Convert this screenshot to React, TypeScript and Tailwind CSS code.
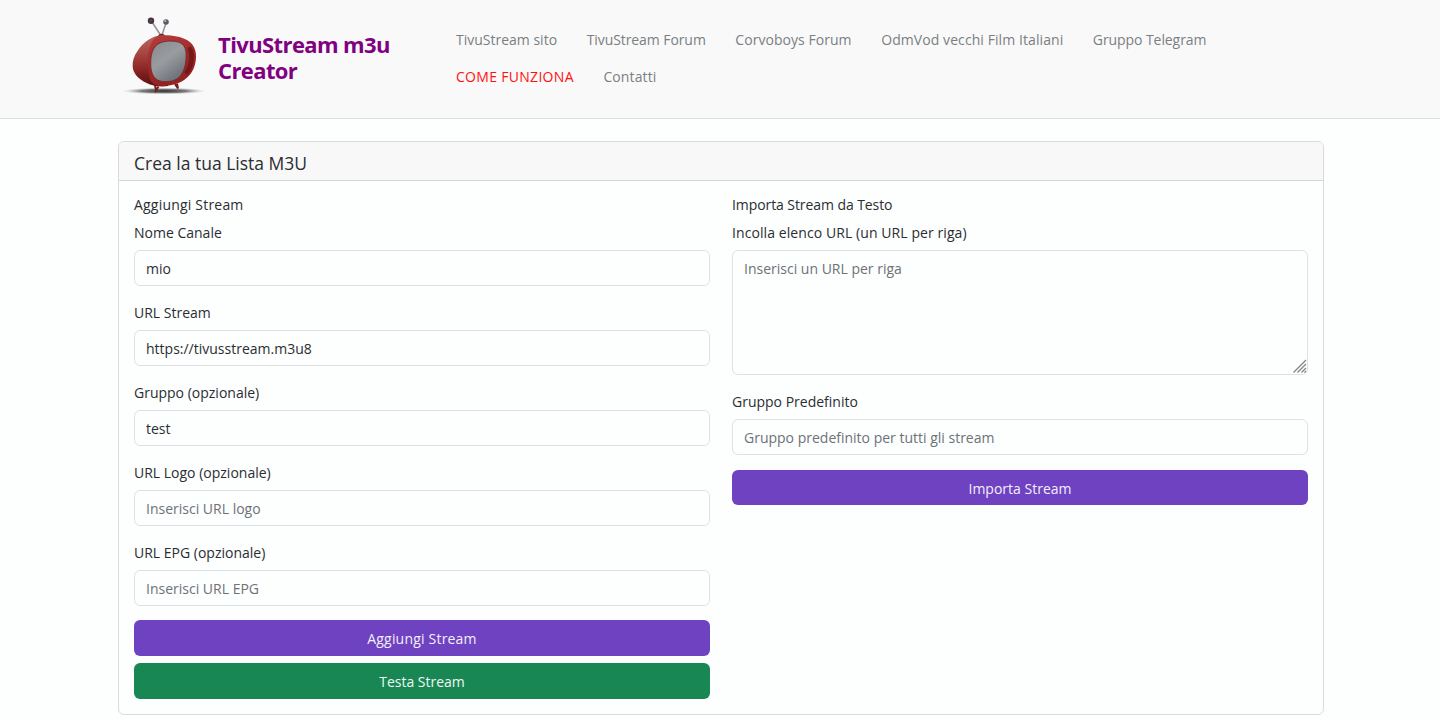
import { useState } from 'react';

const navLinks = [
  { label: 'TivuStream sito', className: 'text-[#7b7f83] tracking-normal' },
  { label: 'TivuStream Forum', className: 'text-[#7b7f83] -tracking-[0.08px]' },
  { label: 'Corvoboys Forum', className: 'text-[#7b7f83] tracking-[0.04px]' },
  { label: 'OdmVod vecchi Film Italiani', className: 'text-[#7b7f83] tracking-[0.08px]' },
  { label: 'Gruppo Telegram', className: 'text-[#7b7f83] -tracking-[0.08px]' },
  { label: 'COME FUNZIONA', className: 'text-[#ff1010] tracking-[0.3px]' },
  { label: 'Contatti', className: 'text-[#7b7f83] tracking-[0.12px]' },
];

const controlClass =
  'block w-full rounded-[6px] border border-[#dee2e6] bg-[#fdfefe] px-[11px] text-[#2a2e32] outline-none placeholder:text-[#6c7278] placeholder:opacity-100';

const TvLogo = () => (
  <svg className="h-[90px] w-[90px] shrink-0" viewBox="0 0 90 90" fill="none">
    <defs>
      <linearGradient id="shell" x1="26" y1="30" x2="30" y2="76" gradientUnits="userSpaceOnUse">
        <stop stopColor="#b5605a" />
        <stop offset="0.4" stopColor="#a03a36" />
        <stop offset="0.75" stopColor="#7c1c1c" />
        <stop offset="1" stopColor="#5c1214" />
      </linearGradient>
      <linearGradient id="face" x1="44" y1="26" x2="62" y2="77" gradientUnits="userSpaceOnUse">
        <stop stopColor="#b23b3a" />
        <stop offset="0.5" stopColor="#9c2626" />
        <stop offset="1" stopColor="#94201f" />
      </linearGradient>
      <linearGradient id="screen" x1="34" y1="34" x2="62" y2="72" gradientUnits="userSpaceOnUse">
        <stop stopColor="#8a8d8f" />
        <stop offset="0.4" stopColor="#9a9da0" />
        <stop offset="1" stopColor="#63656f" />
      </linearGradient>
      <radialGradient id="shadow">
        <stop stopColor="#2a2a2a" />
        <stop offset="0.55" stopColor="#555" stopOpacity="0.75" />
        <stop offset="1" stopColor="#bbb" stopOpacity="0" />
      </radialGradient>
    </defs>
    <ellipse cx="44" cy="81" rx="42" ry="3.4" fill="url(#shadow)" />
    {/* antennas */}
    <path d="m32 12 8.5 13M46 13l-4 12" stroke="#8f9399" strokeWidth="1.5" />
    <circle cx="31" cy="10.7" r="3.2" fill="#3d3843" />
    <circle cx="30.8" cy="10.5" r="1.2" fill="#7c3a42" />
    <circle cx="46" cy="12" r="2.8" fill="#5b5b62" />
    <circle cx="45.3" cy="11" r="1.1" fill="#b9b9bf" />
    <path d="M38 26c1-3 6-3 7 0Z" fill="#6b2526" />
    {/* feet */}
    <path d="m35 75 1 5.500 2.500-4M55 74l3 4.500-1-5" stroke="#7c191a" strokeWidth="2" />
    <path
      d="M40 25.5C33 26 23 32 17.500 41c-3.500 5-5.300 10-4.800 16 .6 8 8.300 14 17.300 17.500 5 1.800 12 2.500 18 1.500V26Z"
      fill="url(#shell)"
    />
    <path
      d="M40 25.5c8-1 20 .5 27 4.5 6 3.500 9 9 9 16.500 0 9-3.500 17-10 22-7 6-19 8.500-28.500 7C30 74 28 66 28 53c0-14 3-26 12-27.500Z"
      fill="url(#face)"
    />
    <path d="M70 39c3 6 2 16-3 23" stroke="#651217" strokeWidth="4.500" strokeLinecap="round" opacity="0.7" />
    <path
      d="M45 31.500c6-.8 13-.6 17 2.500 4 3.200 4.500 9 4 15.500-.5 7-3 14-7 18-4.500 4-13 5-19 3.500-7-2-9.300-9-9.300-18C30.700 42 34 33 45 31.500Z"
      fill="url(#screen)"
      stroke="#742428"
      strokeWidth="0.8"
    />
  </svg>
);

interface FieldProps {
  label: string;
  placeholder?: string;
  value?: string;
}

const Field = ({ label, placeholder, value = '' }: FieldProps) => {
  const [text, setText] = useState(value);

  return (
    <div>
      <label className="mb-[6px] block h-[22px]">{label}</label>
      <input
        type="text"
        value={text}
        placeholder={placeholder}
        onChange={(e) => setText(e.target.value)}
        className={`${controlClass} h-9 pt-px`}
      />
    </div>
  );
};

const Header = () => (
  <header className="flex h-[119px] border-b border-[#dee0e3] bg-[#f9f9f9] pl-[120px]">
    <a href="#" className="flex w-[321px] pt-[10px]">
      <TvLogo />
      <span className="ml-[8px] mt-[21px] w-[200px] text-[22px] font-bold leading-[26px] -tracking-[0.6px] text-[#800080]">
        TivuStream m3u
        <br />
        Creator
      </span>
    </a>
    <nav className="flex w-[800px] flex-wrap content-start gap-x-[29.6px] pl-[15px] pt-[21px]">
      {navLinks.map((link) => (
        <a key={link.label} href="#" className={`h-[37px] leading-[37px] ${link.className}`}>
          {link.label}
        </a>
      ))}
    </nav>
  </header>
);

export default function App() {
  return (
    <div className="min-h-[720px] bg-[#fdfefe] font-['Open_Sans','Noto_Sans',sans-serif] text-[14px] leading-[22px] text-[#2a2e32]">
      <Header />
      <main className="ml-[118px] mt-[22px] w-[1206px] rounded-[6px] border border-[#d8dadb]">
        <h5 className="h-[39px] rounded-t-[5px] border-b border-[#d8d6da] bg-[#f8f8f8] pl-[15px] text-[17.5px] leading-[42px]">
          Crea la tua Lista M3U
        </h5>
        <div className="grid grid-cols-2 gap-x-[22px] px-[15px] pb-[15px] pt-[13px]">
          <section>
            <h6 className="mb-[6px] tracking-[0.2px]">Aggiungi Stream</h6>
            <div className="flex flex-col gap-4">
              <Field label="Nome Canale" value="mio" />
              <Field label="URL Stream" value="https://tivusstream.m3u8" />
              <Field label="Gruppo (opzionale)" value="test" />
              <Field label="URL Logo (opzionale)" placeholder="Inserisci URL logo" />
              <Field label="URL EPG (opzionale)" placeholder="Inserisci URL EPG" />
            </div>
            <button className="mt-[14px] block h-9 w-full rounded-[6px] bg-[#6f42c1] pt-[2px] tracking-[0.2px] text-[#f4f0fa]">
              Aggiungi Stream
            </button>
            <button className="mt-[7px] block h-9 w-full rounded-[6px] bg-[#198754] pt-[2px] text-[#f0f8f4]">
              Testa Stream
            </button>
          </section>
          <section>
            <h6 className="mb-[6px] -tracking-[0.08px]">Importa Stream da Testo</h6>
            <label className="mb-[6px] block h-[22px] tracking-[0.08px]">Incolla elenco URL (un URL per riga)</label>
            <div className="relative mb-4">
              <textarea
                placeholder="Inserisci un URL per riga"
                className={`${controlClass} h-[125px] resize-none pt-[7px]`}
              />
              {/* resize grip */}
              <svg
                className="pointer-events-none absolute bottom-[2px] right-px h-[14px] w-[14px]"
                viewBox="0 0 14 14"
                stroke="#858085"
                strokeWidth="1.2"
              >
                <path d="M0.5 13.5 13 1M4.5 13.5 13 5M8.5 13.5 13 9M11.5 13.5 13 12" />
              </svg>
            </div>
            <Field label="Gruppo Predefinito" placeholder="Gruppo predefinito per tutti gli stream" />
            <button className="mt-[15px] block h-[35px] w-full rounded-[6px] bg-[#6f42c1] pt-[2px] text-[#f4f0fa]">
              Importa Stream
            </button>
          </section>
        </div>
      </main>
    </div>
  );
}
